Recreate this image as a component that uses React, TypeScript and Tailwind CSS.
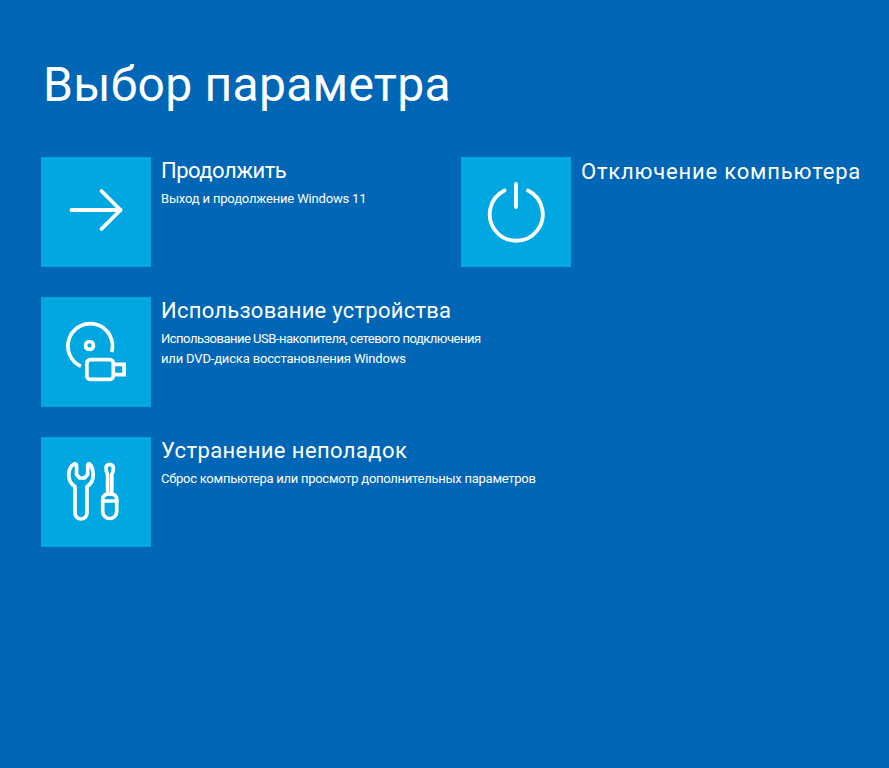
import type { ReactNode } from "react";

function ArrowIcon() {
  return (
    <svg viewBox="0 0 110 110" className="h-full w-full" fill="none" stroke="#fff" strokeWidth="3.8" strokeLinecap="round" strokeLinejoin="round">
      <path d="M30.500 53h49" />
      <path d="M60.500 34l19 19-19 19" />
    </svg>
  );
}

function PowerIcon() {
  return (
    <svg viewBox="0 0 110 110" className="h-full w-full" fill="none" stroke="#fff" strokeWidth="3.8" strokeLinecap="round">
      <path d="M55 27v23" />
      <path d="M43.500 33.500A26.500 26.500 0 1 0 67 33.500" />
    </svg>
  );
}

function DeviceIcon() {
  return (
    <svg viewBox="0 0 110 110" className="h-full w-full" fill="none" stroke="#fff" strokeWidth="3.7">
      <path d="M70.700 55A22.300 22.300 0 1 0 40 69.300" />
      <circle cx="48.500" cy="48.500" r="4" />
      <rect x="45.900" y="62.600" width="26.400" height="19.800" rx="3.500" />
      <path d="M72.300 67.300H83.100V77.700H72.300" />
    </svg>
  );
}

function ToolsIcon() {
  return (
    <svg viewBox="0 0 110 110" className="h-full w-full" fill="none" stroke="#fff" strokeWidth="3.7" strokeLinejoin="round" strokeLinecap="round">
      <path d="M35.600 29C35.600 27.200 34.600 26.500 33.300 27C29.800 28.500 27.800 33 27.800 38.500C27.800 43 30 47 34 49.500V76A6 6 0 0 0 46 76V49.500C50 47 52.200 43 52.200 38.500C52.200 33 50.200 28.500 48.500 27C47.500 26.500 46.700 27.200 46.700 29V37.500L43.500 41H38.600L35.600 37.500Z" />
      <path d="M66.600 57V37.500C65.800 36 65 34 65 31A3.700 3.700 0 0 1 72.400 31C72.400 34 71.600 36 70.800 37.500V57" />
      <path d="M66.600 57C63 58 61.700 60 61.700 62V74.500A7 7 0 0 0 75.700 74.500V62C75.700 60 74.400 58 70.800 57Z" />
      <path d="M61.700 64H75.700" />
    </svg>
  );
}

function Option({ icon, title, titleClass, children }: { icon: ReactNode; title: string; titleClass: string; children?: ReactNode }) {
  return (
    <div className="flex h-[110px] w-[420px] shrink-0">
      <div className="h-[110px] w-[110px] shrink-0 bg-[#00a7e1]">{icon}</div>
      <div className="ml-[10px] whitespace-nowrap text-white">
        <div className={`text-[22px] leading-[28px] ${titleClass}`}>{title}</div>
        {children && <div className="mt-[4px] text-[13px] leading-[20px]">{children}</div>}
      </div>
    </div>
  );
}

export default function App() {
  return (
    <div className="h-[768px] w-[889px] overflow-hidden bg-[#0066b5] pl-[41px] pt-[51px] font-['Roboto',sans-serif]">
      <h1 className="ml-[2px] text-[48px] leading-[68px] tracking-[0.27px] text-white">Выбор параметра</h1>
      <div className="mt-[38px] flex">
        <div className="flex flex-col gap-[30px]">
          <Option icon={<ArrowIcon />} title="Продолжить" titleClass="tracking-[-0.5px]">
            <p className="tracking-[-0.17px]">Выход и продолжение Windows 11</p>
          </Option>
          <Option icon={<DeviceIcon />} title="Использование устройства" titleClass="tracking-[0.25px]">
            <p className="tracking-[-0.5px]">Использование USB-накопителя, сетевого подключения</p>
            <p className="tracking-[-0.17px]">или DVD-диска восстановления Windows</p>
          </Option>
          <Option icon={<ToolsIcon />} title="Устранение неполадок" titleClass="tracking-[0.4px]">
            <p className="tracking-[-0.26px]">Сброс компьютера или просмотр дополнительных параметров</p>
          </Option>
        </div>
        <Option icon={<PowerIcon />} title="Отключение компьютера" titleClass="mt-[1px] tracking-[0.8px]" />
      </div>
    </div>
  );
}
